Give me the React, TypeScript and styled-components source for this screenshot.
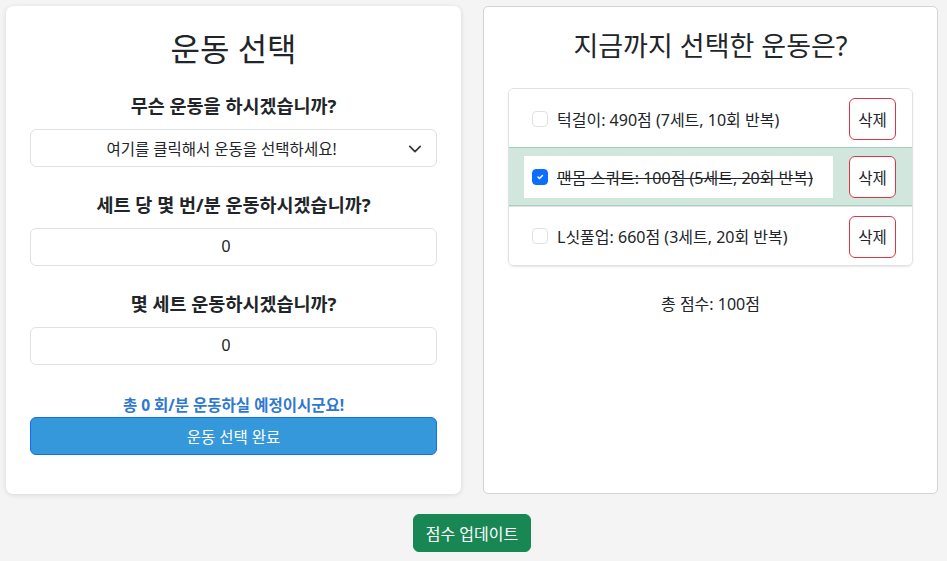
import React from "react";
import styled, { createGlobalStyle } from "styled-components";

const Global = createGlobalStyle`
  html, body { margin: 0; padding: 0; background: #f4f4f4; }
  body { font-family: "Noto Sans", "Noto Sans CJK KR", sans-serif; color: #212529; }
  * { box-sizing: border-box; }
`;

const Page = styled.div`
  display: flex;
  flex-direction: column;
  align-items: center;
  padding: 6px 9px 0 6px;
`;

const Columns = styled.div`
  display: flex;
  gap: 22px;
  width: 100%;
  align-items: stretch;
`;

const LeftCard = styled.section`
  flex: 0 0 455px;
  background: #fff;
  border-radius: 7px;
  box-shadow: 0 1px 5px rgba(0, 0, 0, 0.12);
  padding: 24px 24px 39px;
  display: flex;
  flex-direction: column;
`;

const RightCard = styled.section`
  flex: 0 0 455px;
  background: #fff;
  border: 1px solid #d4d4d4;
  border-radius: 5px;
  padding: 23px 24px 24px;
  display: flex;
  flex-direction: column;
`;

const Title = styled.h2<{ $size: number }>`
  margin: 0;
  text-align: center;
  font-weight: 400;
  font-size: ${(p) => p.$size}px;
  line-height: 1.2;
`;

const Label = styled.h5`
  margin: 26px 0 11px;
  text-align: center;
  font-size: 18.5px;
  font-weight: 700;
  line-height: 24px;
`;

const SelectBox = styled.div`
  position: relative;
  height: 38px;
  border: 1px solid #dee2e6;
  border-radius: 6px;
  display: flex;
  align-items: center;
  justify-content: center;
  font-size: 15.5px;
  padding: 0 36px 0 12px;
`;

const Chevron = styled.svg`
  position: absolute;
  right: 14px;
  top: 12px;
`;

const NumberInput = styled.div`
  height: 38px;
  border: 1px solid #dee2e6;
  border-radius: 6px;
  display: flex;
  align-items: center;
  justify-content: center;
  padding: 0 27px 1px 12px;
  font-size: 16px;
  font-family: "Liberation Sans", Arial, sans-serif;
`;

const Summary = styled.p`
  margin: 28px 0 0;
  text-align: center;
  color: #2f78d0;
  font-weight: 700;
  font-size: 15.5px;
  line-height: 24px;
`;

const PrimaryButton = styled.button`
  height: 38px;
  background: #3498db;
  border: 1px solid #0d6efd;
  border-radius: 6px;
  color: #fff;
  font-family: inherit;
  font-size: 15.5px;
`;

const List = styled.ul`
  margin: 26px 0 0;
  padding: 0;
  list-style: none;
  border: 1px solid #dee2e6;
  border-radius: 6px;
  box-shadow: 0 1px 2px rgba(0, 0, 0, 0.1);
  overflow: hidden;
`;

const Row = styled.li<{ $done: boolean }>`
  display: flex;
  align-items: center;
  height: 59px;
  padding: 0 16px 0 15px;
  background: ${(p) => (p.$done ? "#d1e7dd" : "#fff")};
  border-top: 1px solid ${(p) => (p.$done ? "#a3cfbb" : "#dee2e6")};
  border-bottom: ${(p) => (p.$done ? "1px solid #a3cfbb" : "0")};
  margin-top: ${(p) => (p.$done ? "-1px" : "0")};
  &:first-child { border-top: 0; margin-top: 0; }
`;

const ItemLabel = styled.label<{ $done: boolean }>`
  flex: 0 0 309px;
  height: 42px;
  background: #fff;
  display: flex;
  align-items: center;
  gap: 9px;
  padding: 0 8px;
  font-size: 16px;
  text-decoration: ${(p) => (p.$done ? "line-through" : "none")};
`;

const Check = styled.span<{ $on: boolean }>`
  flex: 0 0 16px;
  width: 16px;
  height: 16px;
  border-radius: 4px;
  border: 1px solid ${(p) => (p.$on ? "#0d6efd" : "#dee2e6")};
  background: ${(p) => (p.$on ? "#0d6efd" : "#fff")};
  display: flex;
  align-items: center;
  justify-content: center;
`;

const DeleteButton = styled.button`
  margin-left: auto;
  margin-top: 1px;
  width: 47px;
  height: 42px;
  background: #fff;
  border: 1px solid #dc3545;
  border-radius: 6px;
  color: #212529;
  font-family: inherit;
  font-size: 15.5px;
  padding: 0;
`;

const Total = styled.p`
  margin: 26px 0 0;
  text-align: center;
  font-size: 16px;
  line-height: 24px;
`;

const UpdateButton = styled.button`
  margin-top: 20px;
  height: 38px;
  padding: 0 12px;
  background: #198754;
  border: 1px solid #198754;
  border-radius: 6px;
  color: #fff;
  font-family: inherit;
  font-size: 16px;
`;

const items = [
  { text: "턱걸이: 490점 (7세트, 10회 반복)", done: false },
  { text: "맨몸 스쿼트: 100점 (5세트, 20회 반복)", done: true },
  { text: "L싯풀업: 660점 (3세트, 20회 반복)", done: false },
];

export default function App() {
  return (
    <>
      <Global />
      <Page>
        <Columns>
          <LeftCard>
            <Title $size={32}>운동 선택</Title>
            <Label>무슨 운동을 하시겠습니까?</Label>
            <SelectBox>
              여기를 클릭해서 운동을 선택하세요!
              <Chevron width="14" height="14" viewBox="0 0 16 16">
                <path d="M2 5l6 6 6-6" fill="none" stroke="#343a40" strokeWidth="2" strokeLinecap="round" strokeLinejoin="round" />
              </Chevron>
            </SelectBox>
            <Label>세트 당 몇 번/분 운동하시겠습니까?</Label>
            <NumberInput>0</NumberInput>
            <Label>몇 세트 운동하시겠습니까?</Label>
            <NumberInput>0</NumberInput>
            <Summary>총 0 회/분 운동하실 예정이시군요!</Summary>
            <PrimaryButton>운동 선택 완료</PrimaryButton>
          </LeftCard>
          <RightCard>
            <Title $size={27}>지금까지 선택한 운동은?</Title>
            <List>
              {items.map((it) => (
                <Row key={it.text} $done={it.done}>
                  <ItemLabel $done={it.done}>
                    <Check $on={it.done}>
                      {it.done && (
                        <svg width="10" height="10" viewBox="0 0 20 20">
                          <path d="M6 10l3 3 6-6" fill="none" stroke="#fff" strokeWidth="3" strokeLinecap="round" strokeLinejoin="round" />
                        </svg>
                      )}
                    </Check>
                    {it.text}
                  </ItemLabel>
                  <DeleteButton>삭제</DeleteButton>
                </Row>
              ))}
            </List>
            <Total>총 점수: 100점</Total>
          </RightCard>
        </Columns>
        <UpdateButton>점수 업데이트</UpdateButton>
      </Page>
    </>
  );
}
